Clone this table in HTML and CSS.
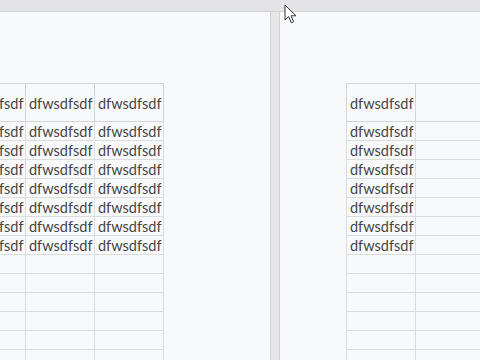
FILE: index.html
```html
<!DOCTYPE html>
<html lang="en">
<head>
<meta charset="utf-8">
<title>Sheets</title>
<link rel="stylesheet" href="styles.css">
</head>
<body>
<div class="app">
  <div class="topbar"></div>
  <div class="workspace">
    <section class="page page-left">
      <table class="sheet sheet-left">
        <colgroup><col class="c"><col class="c"><col class="c"></colgroup>
        <tr class="head"><td>dfwsdfsdf</td><td>dfwsdfsdf</td><td>dfwsdfsdf</td></tr>
        <tr><td>dfwsdfsdf</td><td>dfwsdfsdf</td><td>dfwsdfsdf</td></tr>
        <tr><td>dfwsdfsdf</td><td>dfwsdfsdf</td><td>dfwsdfsdf</td></tr>
        <tr><td>dfwsdfsdf</td><td>dfwsdfsdf</td><td>dfwsdfsdf</td></tr>
        <tr><td>dfwsdfsdf</td><td>dfwsdfsdf</td><td>dfwsdfsdf</td></tr>
        <tr><td>dfwsdfsdf</td><td>dfwsdfsdf</td><td>dfwsdfsdf</td></tr>
        <tr><td>dfwsdfsdf</td><td>dfwsdfsdf</td><td>dfwsdfsdf</td></tr>
        <tr><td>dfwsdfsdf</td><td>dfwsdfsdf</td><td>dfwsdfsdf</td></tr>
        <tr><td></td><td></td><td></td></tr>
        <tr><td></td><td></td><td></td></tr>
        <tr><td></td><td></td><td></td></tr>
        <tr><td></td><td></td><td></td></tr>
        <tr><td></td><td></td><td></td></tr>
        <tr><td></td><td></td><td></td></tr>
        <tr><td></td><td></td><td></td></tr>
      </table>
    </section>
    <div class="gutter"></div>
    <section class="page page-right">
      <table class="sheet sheet-right">
        <colgroup><col class="c"><col class="c"></colgroup>
        <tr class="head"><td>dfwsdfsdf</td><td></td></tr>
        <tr><td>dfwsdfsdf</td><td></td></tr>
        <tr><td>dfwsdfsdf</td><td></td></tr>
        <tr><td>dfwsdfsdf</td><td></td></tr>
        <tr><td>dfwsdfsdf</td><td></td></tr>
        <tr><td>dfwsdfsdf</td><td></td></tr>
        <tr><td>dfwsdfsdf</td><td></td></tr>
        <tr><td>dfwsdfsdf</td><td></td></tr>
        <tr><td></td><td></td></tr>
        <tr><td></td><td></td></tr>
        <tr><td></td><td></td></tr>
        <tr><td></td><td></td></tr>
        <tr><td></td><td></td></tr>
        <tr><td></td><td></td></tr>
        <tr><td></td><td></td></tr>
      </table>
    </section>
  </div>
  <svg class="cursor" width="14" height="21" viewBox="0 0 14 21" aria-hidden="true">
    <path d="M1 1 L1 16 L4.6 12.6 L7.3 18.8 L9.6 17.8 L7 11.8 L12 11.8 Z" fill="#ffffff" stroke="#333333" stroke-width="1" stroke-linejoin="round"/>
  </svg>
</div>
</body>
</html>
```

FILE: styles.css
```css
html, body {
  margin: 0;
  padding: 0;
}
body {
  width: 480px;
  height: 360px;
  overflow: hidden;
  background: #e4e4e6;
  font-family: "Lato", "Open Sans", sans-serif;
}
.app {
  position: relative;
  width: 480px;
  height: 360px;
  overflow: hidden;
}
.topbar {
  height: 11px;
  background: #e4e4e6;
  border-bottom: 1px solid #cfcfd1;
}
.workspace {
  display: flex;
  height: 348px;
}
.page {
  background: #f8f9fa;
  overflow: hidden;
  padding-top: 71px;
  box-sizing: border-box;
  height: 348px;
}
.page-left {
  width: 271px;
  flex: none;
  border-right: 1px solid #d2d2d4;
}
.gutter {
  width: 8px;
  flex: none;
  background: #e6e6e8;
}
.page-right {
  flex: 1;
  border-left: 1px solid #d2d2d4;
}
.sheet {
  border-collapse: collapse;
  table-layout: fixed;
  color: #454545;
  font-size: 14.5px;
  line-height: 17px;
}
.sheet-left {
  width: 207px;
  margin-left: -44px;
}
.sheet-right {
  width: 207px;
  margin-left: 66px;
}
.sheet-right col:last-child {
  width: 138px;
}
.c {
  width: 69px;
}
.sheet td {
  height: 17px;
  padding: 1px 0 0 3px;
  border: 1px solid #dcdcde;
  white-space: nowrap;
  overflow: hidden;
  vertical-align: bottom;
}
.sheet .head td {
  height: 36px;
  padding-top: 1px;
  vertical-align: middle;
  border-color: #d4d4d6;
}
.cursor {
  position: absolute;
  left: 284px;
  top: 4px;
}
```
